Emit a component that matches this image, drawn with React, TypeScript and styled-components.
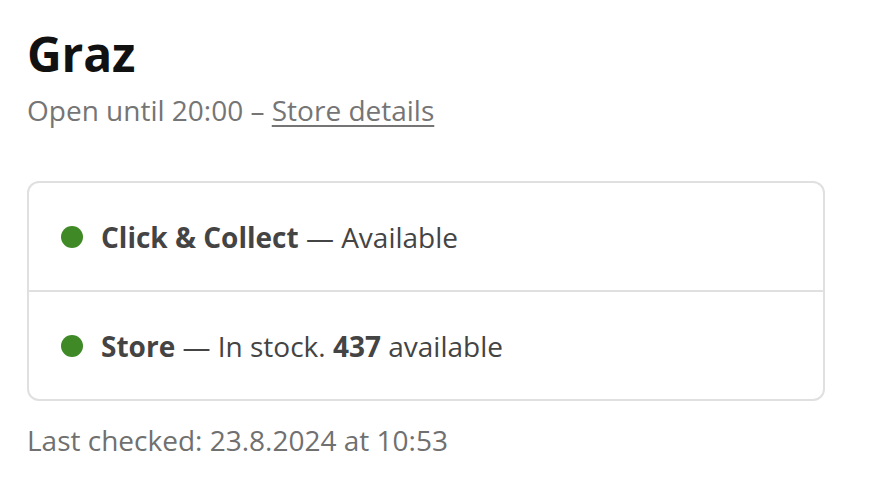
import styled, { createGlobalStyle } from 'styled-components';

const GlobalStyle = createGlobalStyle`
  html, body {
    margin: 0;
    padding: 0;
    background: #ffffff;
  }
  body {
    font-family: "Open Sans", "Noto Sans", sans-serif;
    -webkit-font-smoothing: antialiased;
  }
`;

interface Availability {
  label: string;
  detail: React.ReactNode;
}

const rows: Availability[] = [
  { label: 'Click & Collect', detail: <>Available</> },
  {
    label: 'Store',
    detail: (
      <>
        In stock. <strong>437</strong> available
      </>
    ),
  },
];

const App = () => {
  return (
    <Page>
      <GlobalStyle />
      <Title>Graz</Title>
      <Hours>
        Open until 20:00 – <DetailsLink href="#">Store details</DetailsLink>
      </Hours>

      <Card>
        {rows.map((row) => (
          <Row key={row.label}>
            <Dot />
            <RowText>
              <strong>{row.label}</strong> — {row.detail}
            </RowText>
          </Row>
        ))}
      </Card>

      <Checked>Last checked: 23.8.2024 at 10:53</Checked>
    </Page>
  );
};

const Page = styled.div`
  padding: 24px 27px;
  width: 798px;
`;

const Title = styled.h1`
  margin: 0;
  font-size: 48px;
  line-height: 60px;
  font-weight: 700;
  color: #111111;
  letter-spacing: -0.2px;
`;

const Hours = styled.p`
  margin: 6px 0 0;
  font-size: 28px;
  line-height: 40px;
  color: #757575;
`;

const DetailsLink = styled.a`
  color: #757575;
  text-decoration: underline;
  text-underline-offset: 4px;
  text-decoration-thickness: 1.5px;
`;

const Card = styled.div`
  margin-top: 51px;
  border: 2px solid #e0e0e0;
  border-radius: 12px;
  overflow: hidden;
`;

const Row = styled.div`
  display: flex;
  align-items: center;
  gap: 18px;
  height: 107px;
  padding: 0 32px;

  & + & {
    border-top: 2px solid #e0e0e0;
  }
`;

const Dot = styled.span`
  flex: none;
  width: 22px;
  height: 22px;
  border-radius: 50%;
  background: #3f8a26;
`;

const RowText = styled.span`
  font-size: 28px;
  line-height: 40px;
  color: #444444;

  strong {
    font-weight: 700;
  }
`;

const Checked = styled.p`
  margin: 19px 0 0;
  font-size: 28px;
  line-height: 40px;
  color: #707070;
`;

export default App;
